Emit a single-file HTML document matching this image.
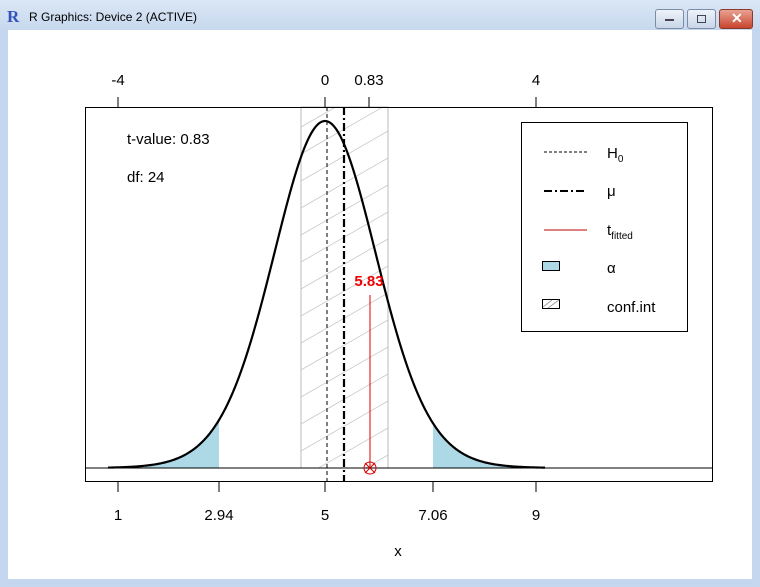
<!DOCTYPE html>
<html><head><meta charset="utf-8"><style>
html,body{margin:0;padding:0;width:760px;height:587px;overflow:hidden;background:#c5d7ee;font-family:"Liberation Sans",sans-serif}
.title{position:absolute;left:0;top:0;width:760px;height:30px;background:linear-gradient(#dbe7f5,#c7d8ee)}
.title span{position:absolute;left:29px;top:10px;font-size:12px;color:#000}
.client{position:absolute;left:8px;top:30px;width:744px;height:549px;background:#fff}
.btn{position:absolute;top:9px;height:18px;border:1px solid #7b8ca6;border-radius:3px;background:linear-gradient(#eef3fa,#c9d6e8)}
</style></head><body>
<div class="title"><svg style="position:absolute;left:7px;top:8px" width="18" height="16"><text x="0" y="14" font-size="17" font-family="Liberation Serif" fill="#3355bb" font-weight="bold">R</text></svg><span>R Graphics: Device 2 (ACTIVE)</span></div>
<div class="btn" style="left:655px;width:27px"><div style="position:absolute;left:9px;top:9px;width:9px;height:2px;background:#445"></div></div>
<div class="btn" style="left:687px;width:27px"><div style="position:absolute;left:9px;top:5px;width:7px;height:6px;border:1px solid #445"></div></div>
<div class="btn" style="left:719px;width:32px;background:linear-gradient(#e9a293,#c8452f);border-color:#8a3a2c"><div style="position:absolute;left:11px;top:0px;color:#fff;font-weight:bold;font-size:14px">✕</div></div>
<div class="client"></div>
<svg id="s" style="position:absolute;left:0;top:0" width="760" height="587" font-family="Liberation Sans" font-size="15">
<defs>
<clipPath id="cb"><rect x="301" y="107" width="87" height="361"/></clipPath>
</defs>
<g clip-path="url(#cb)" stroke="#c8c8c8" stroke-width="0.8" id="hatch"></g>
<rect x="301" y="107" width="87" height="361" fill="none" stroke="#bbb"/>
<path id="aL" fill="#add8e6"/><path id="aR" fill="#add8e6"/>
<line x1="327" y1="107" x2="327" y2="482" stroke="#000" stroke-dasharray="4,3"/>
<line x1="344" y1="107" x2="344" y2="482" stroke="#000" stroke-width="2.2" stroke-dasharray="8,3,2,3"/>
<path id="cv" fill="none" stroke="#000" stroke-width="2.2"/>
<line x1="85" y1="468" x2="713" y2="468" stroke="#000"/>
<rect x="85.5" y="107.5" width="627" height="374" fill="none" stroke="#000"/>
<line x1="370" y1="295" x2="370" y2="468" stroke="#d00"/>
<circle cx="370" cy="468" r="6" fill="none" stroke="#d00"/>
<path d="M365 463L375 473M375 463L365 473" stroke="#d00"/>
<text x="369" y="286" fill="#e00" font-weight="bold" text-anchor="middle" font-size="15">5.83</text>
<g stroke="#000"><path d="M118 97V107M325 97V107M369 97V107M536 97V107M118 482V492M219 482V492M325 482V492M433 482V492M536 482V492"/></g>
<g text-anchor="middle"><text x="118" y="85">-4</text><text x="325" y="85">0</text><text x="369" y="85">0.83</text><text x="536" y="85">4</text>
<text x="118" y="520">1</text><text x="219" y="520">2.94</text><text x="325" y="520">5</text><text x="433" y="520">7.06</text><text x="536" y="520">9</text>
<text x="398" y="556">x</text></g>
<text x="127" y="144">t-value: 0.83</text><text x="127" y="182">df: 24</text>
<rect x="521.5" y="122.5" width="166" height="209" fill="none" stroke="#000"/>
<line x1="544" y1="152" x2="587" y2="152" stroke="#000" stroke-dasharray="3,2"/>
<line x1="544" y1="191" x2="587" y2="191" stroke="#000" stroke-width="2" stroke-dasharray="8,3,2,3"/>
<line x1="544" y1="230" x2="587" y2="230" stroke="#b00"/>
<rect x="542.5" y="261.5" width="17" height="9" fill="#add8e6" stroke="#000"/>
<rect x="542.5" y="299.5" width="17" height="9" fill="#fff" stroke="#000"/>
<path d="M543 307L552 300M548 308L559 300" stroke="#999" stroke-width="0.8"/>
<text x="607" y="158">H<tspan font-size="10" dy="4">0</tspan></text>
<text x="607" y="196">μ</text>
<text x="607" y="235">t<tspan font-size="10" dy="4">fitted</tspan></text>
<text x="607" y="273">α</text>
<text x="607" y="312">conf.int</text>
</svg>
<script>
function y(x){var t=(x-325)/52.25;return 468-347*Math.pow(1+t*t/24,-12.5);}
var d="";for(var x=108;x<=545;x+=1)d+=(x==108?"M":"L")+x+" "+y(x).toFixed(2);
document.getElementById("cv").setAttribute("d",d);
var a="M108 468";for(x=108;x<=219;x++)a+="L"+x+" "+y(x).toFixed(2);a+="L219 468Z";
document.getElementById("aL").setAttribute("d",a);
a="M433 468";for(x=433;x<=545;x++)a+="L"+x+" "+y(x).toFixed(2);a+="L545 468Z";
document.getElementById("aR").setAttribute("d",a);
var h="";for(var yy=100;yy<560;yy+=27)h+="M301 "+yy+"L388 "+(yy-50);
var p=document.createElementNS("http://www.w3.org/2000/svg","path");p.setAttribute("d",h);document.getElementById("hatch").appendChild(p);
</script>
</body></html>
